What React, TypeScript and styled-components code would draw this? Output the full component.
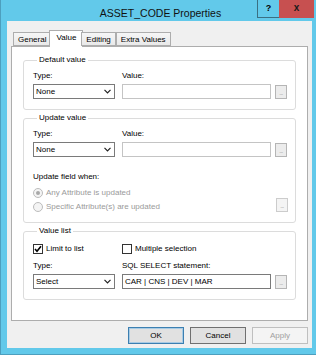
import React from 'react'
import styled, { createGlobalStyle } from 'styled-components'

const GlobalStyle = createGlobalStyle`
  html, body {
    margin: 0;
    padding: 0;
    background: #ffffff;
  }

  body {
    font-family: 'Liberation Sans', Arial, sans-serif;
    font-size: 8px;
    color: #000;
  }
`

const tabs = ['General', 'Value', 'Editing', 'Extra Values']

const Chevron = () => (
  <svg width="7" height="5" viewBox="0 0 7 5">
    <polyline points="0.5,0.8 3.5,3.8 6.5,0.8" fill="none" stroke="#222" strokeWidth="1.2" />
  </svg>
)

const Tick = () => (
  <svg width="8" height="8" viewBox="0 0 8 8">
    <polyline points="1,4 3,6.3 7,1.2" fill="none" stroke="#000" strokeWidth="1.6" />
  </svg>
)

export default function App() {
  return (
    <>
      <GlobalStyle />
      <Window>
        <TitleBar>
          <span />
          <Title>ASSET_CODE Properties</Title>
          <Controls>
            <HelpButton>?</HelpButton>
            <CloseButton>x</CloseButton>
          </Controls>
        </TitleBar>
        <Client>
          <TabStrip>
            {tabs.map(t => (
              <Tab key={t} active={t === 'Value'}>{t}</Tab>
            ))}
          </TabStrip>
          <Panel>
            <Group>
              <Legend>Default value</Legend>
              <FieldGrid>
                <Label>Type:</Label>
                <Label>Value:</Label>
                <span />
                <Select>None<Chevron /></Select>
                <TextBox />
                <Browse>...</Browse>
              </FieldGrid>
            </Group>

            <Group>
              <Legend>Update value</Legend>
              <FieldGrid>
                <Label>Type:</Label>
                <Label>Value:</Label>
                <span />
                <Select>None<Chevron /></Select>
                <TextBox />
                <Browse>...</Browse>
              </FieldGrid>
              <SubLabel>Update field when:</SubLabel>
              <RadioArea>
                <RadioList>
                  <RadioRow>
                    <Radio checked />
                    Any Attribute is updated
                  </RadioRow>
                  <RadioRow>
                    <Radio />
                    Specific Attribute(s) are updated
                  </RadioRow>
                </RadioList>
                <Browse disabled>...</Browse>
              </RadioArea>
            </Group>

            <Group>
              <Legend>Value list</Legend>
              <CheckRow>
                <CheckItem>
                  <CheckBox><Tick /></CheckBox>
                  Limit to list
                </CheckItem>
                <CheckItem>
                  <CheckBox />
                  Multiple selection
                </CheckItem>
              </CheckRow>
              <FieldGrid>
                <Label>Type:</Label>
                <Label>SQL SELECT statement:</Label>
                <span />
                <Select>Select<Chevron /></Select>
                <TextBox dark>CAR | CNS | DEV | MAR</TextBox>
                <Browse>...</Browse>
              </FieldGrid>
            </Group>
          </Panel>
          <ButtonRow>
            <DialogButton variant="default">OK</DialogButton>
            <DialogButton variant="normal">Cancel</DialogButton>
            <DialogButton variant="disabled">Apply</DialogButton>
          </ButtonRow>
        </Client>
      </Window>
    </>
  )
}

const Window = styled.div`
  width: 316px;
  height: 355px;
  box-sizing: border-box;
  background: #62c9ea;
  border-left: 1px solid #4d9fbe;
  border-bottom: 1px solid #4d9fbe;
  display: flex;
  flex-direction: column;
  padding: 0 4px 6px 6px;
`

const TitleBar = styled.div`
  height: 21px;
  flex: none;
  display: grid;
  grid-template-columns: 1fr auto 1fr;
  align-items: start;
  margin-right: -2px;
`

const Title = styled.div`
  font-size: 10.5px;
  line-height: 12px;
  padding-top: 7px;
  color: #111;
  white-space: nowrap;
`

const Controls = styled.div`
  display: flex;
  justify-content: flex-end;
`

const HelpButton = styled.div`
  width: 21px;
  height: 17px;
  border: 1px solid #3a6f82;
  border-top: none;
  border-right: none;
  background: #62c9ea;
  font-weight: bold;
  font-size: 9px;
  line-height: 16px;
  text-align: center;
`

const CloseButton = styled.div`
  width: 35px;
  height: 18px;
  background: #c75050;
  font-weight: bold;
  font-size: 10px;
  line-height: 15px;
  text-align: center;
  color: #1b1b1b;
`

const Client = styled.div`
  flex: 1;
  background: #f0f0f0;
  display: flex;
  flex-direction: column;
  padding: 9px 4px 0 4px;
`

const TabStrip = styled.div`
  display: flex;
  align-items: flex-end;
  padding-left: 2px;
  height: 16px;
  position: relative;
  z-index: 1;
`

const Tab = styled.div<{ active?: boolean }>`
  box-sizing: border-box;
  height: ${p => (p.active ? '17px' : '14px')};
  margin: ${p => (p.active ? '0 -2px -1px -2px' : '0')};
  padding: ${p => (p.active ? '1px 6px 0' : '1px 4px 0')};
  background: ${p => (p.active ? '#ffffff' : 'linear-gradient(#f6f6f6, #e9e9e9)')};
  border: 1px solid #adadad;
  border-bottom: ${p => (p.active ? 'none' : '1px solid #adadad')};
  border-left-width: ${p => (p.active ? '1px' : '0')};
  line-height: 11px;
  white-space: nowrap;
  &:first-child {
    border-left-width: 1px;
  }
  & + & {
    border-left-width: ${p => (p.active ? '1px' : '0')};
  }
`

const Panel = styled.div`
  height: 275px;
  box-sizing: border-box;
  background: #ffffff;
  border: 1px solid #adadad;
  padding: 8px 11px 0;
  display: flex;
  flex-direction: column;
  gap: 3px;
`

const Group = styled.fieldset`
  margin: 0;
  border: 1px solid #dcdcdc;
  border-radius: 3px;
  padding: 6px 7px 10px 9px;
  min-width: 0;
`

const Legend = styled.legend`
  padding: 0 2px;
  margin-left: 4px;
  line-height: 10px;
  font-size: 8px;
`

const FieldGrid = styled.div`
  display: grid;
  grid-template-columns: 82px 149px 12px;
  column-gap: 7px;
  row-gap: 3px;
  align-items: end;
  & > :nth-child(3n) {
    margin-left: -3px;
  }
`

const Label = styled.div`
  line-height: 10px;
  white-space: nowrap;
`

const Select = styled.div`
  box-sizing: border-box;
  height: 15px;
  border: 1px solid #7a7a7a;
  background: #fff;
  display: flex;
  align-items: center;
  justify-content: space-between;
  padding: 0 3px 0 2px;
  line-height: 13px;
`

const TextBox = styled.div<{ dark?: boolean }>`
  box-sizing: border-box;
  height: 15px;
  border: 1px solid ${p => (p.dark ? '#7a7a7a' : '#c4c4c4')};
  background: #fff;
  padding: 0 2px;
  line-height: 13px;
  white-space: nowrap;
`

const Browse = styled.div<{ disabled?: boolean }>`
  box-sizing: border-box;
  width: 12px;
  height: 14px;
  border: 1px solid ${p => (p.disabled ? '#cccccc' : '#b5b5b5')};
  background: ${p => (p.disabled ? '#f4f4f4' : '#ececec')};
  color: #8a8a8a;
  font-size: 6px;
  line-height: 15px;
  text-align: center;
  letter-spacing: -0.5px;
`

const SubLabel = styled.div`
  line-height: 10px;
  margin-top: 15px;
`

const RadioArea = styled.div`
  display: flex;
  justify-content: space-between;
  align-items: flex-end;
  margin-top: 6px;
`

const RadioList = styled.div`
  display: flex;
  flex-direction: column;
  gap: 4px;
`

const RadioRow = styled.div`
  display: flex;
  align-items: center;
  gap: 3px;
  line-height: 10px;
  color: #9a9a9a;
`

const Radio = styled.span<{ checked?: boolean }>`
  box-sizing: border-box;
  width: 10px;
  height: 10px;
  border-radius: 50%;
  border: 1px solid #bcbcbc;
  background: #f4f4f4;
  display: flex;
  align-items: center;
  justify-content: center;
  &::after {
    content: '';
    width: 4px;
    height: 4px;
    border-radius: 50%;
    background: ${p => (p.checked ? '#a8a8a8' : 'transparent')};
  }
`

const CheckRow = styled.div`
  display: grid;
  grid-template-columns: 89px 1fr;
  margin-top: 2px;
  margin-bottom: 7px;
`

const CheckItem = styled.div`
  display: flex;
  align-items: center;
  gap: 3px;
  line-height: 10px;
`

const CheckBox = styled.span`
  box-sizing: border-box;
  width: 10px;
  height: 10px;
  border: 1px solid #333;
  background: #fff;
  display: flex;
  align-items: center;
  justify-content: center;
`

const ButtonRow = styled.div`
  display: flex;
  justify-content: flex-end;
  gap: 6px;
  padding-top: 6px;
`

const DialogButton = styled.div<{ variant: 'default' | 'normal' | 'disabled' }>`
  box-sizing: border-box;
  width: 56px;
  height: 17px;
  text-align: center;
  line-height: 15px;
  border: 1px solid
    ${p => (p.variant === 'default' ? '#3c7fb1' : p.variant === 'normal' ? '#707070' : '#bfbfbf')};
  background: ${p => (p.variant === 'disabled' ? '#f4f4f4' : '#e1e1e1')};
  color: ${p => (p.variant === 'disabled' ? '#a0a0a0' : '#000')};
  box-shadow: ${p => (p.variant === 'default' ? 'inset 0 0 0 1px #a8cbe4' : 'none')};
`
